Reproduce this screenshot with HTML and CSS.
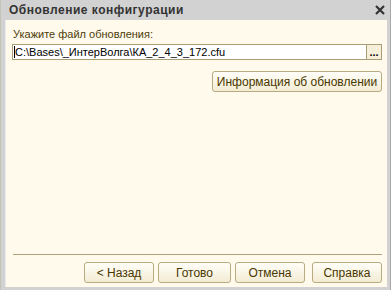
FILE: index.html
```html
<!DOCTYPE html>
<html lang="ru">
<head>
    <meta charset="UTF-8">
    <title>Обновление конфигурации</title>
    <link rel="stylesheet" href="styles.css">
</head>
<body>
    <div class="window">
        <div class="titlebar">
            <span class="title">Обновление конфигурации</span>
            <svg class="close" width="10" height="10" viewBox="0 0 10 10">
                <path d="M1 1 L9 9 M9 1 L1 9" stroke="#333" stroke-width="2.2"/>
            </svg>
        </div>
        <div class="content">
            <div class="label">Укажите файл обновления:</div>
            <div class="file-row">
                <div class="file-input">C:\Bases\_ИнтерВолга\КА_2_4_3_172.cfu</div>
                <div class="dots">...</div>
            </div>
            <div class="info-row">
                <button class="btn info">Информация об обновлении</button>
            </div>
            <div class="spacer"></div>
            <div class="separator"></div>
            <div class="buttons">
                <button class="btn">&lt; Назад</button>
                <button class="btn wide">Готово</button>
                <button class="btn">Отмена</button>
                <button class="btn help">Справка</button>
            </div>
        </div>
    </div>
</body>
</html>
```

FILE: styles.css
```css
body {
    margin: 0;
    padding: 0;
    font-family: "Liberation Sans", Arial, sans-serif;
    font-size: 11px;
    color: #4a3a0a;
}

.window {
    width: 391px;
    height: 290px;
    box-sizing: border-box;
    background-color: #d2d2d2;
    border-left: 1px solid #c4c4b4;
    border-right: 1px solid #a8a8a8;
    display: flex;
    flex-direction: column;
}

.titlebar {
    height: 20px;
    display: flex;
    align-items: center;
    padding: 0 4px 0 8px;
}

.title {
    font-weight: bold;
    font-size: 12px;
    color: #333;
    flex: 1;
    letter-spacing: 0.5px;
}

.close {
    margin-right: 1px;
}

.content {
    flex: 1;
    margin: 0 3px 3px 4px;
    background-color: #fffaeb;
    border-left: 1px solid #e8e8f0;
    display: flex;
    flex-direction: column;
    padding: 7px 5px 4px 6px;
}

.label {
    height: 14px;
    line-height: 14px;
    margin-left: 1px;
    color: #4d3c08;
}

.file-row {
    display: flex;
    margin-top: 3px;
    height: 16px;
}

.file-input {
    flex: 1;
    background-color: #fff;
    border: 1px solid #a89d74;
    border-right: none;
    line-height: 14px;
    padding-left: 1px;
    color: #000;
    overflow: hidden;
    white-space: nowrap;
}

.file-input::before {
    content: "";
    display: inline-block;
    width: 1px;
    height: 12px;
    background: #000;
    vertical-align: -2px;
}

.dots {
    width: 14px;
    border: 1px solid #a89d74;
    background-color: #f6f0da;
    text-align: center;
    line-height: 14px;
    color: #000;
    font-weight: bold;
    font-size: 11px;
}

.info-row {
    display: flex;
    justify-content: flex-end;
    margin-top: 11px;
}

.btn {
    font-family: "Liberation Sans", Arial, sans-serif;
    font-size: 12px;
    color: #4a3700;
    height: 21px;
    width: 70px;
    padding: 0;
    border: 1px solid #b8ab80;
    border-radius: 3px;
    background: linear-gradient(#fffef8, #f3ecd4);
}

.info {
    width: 170px;
}

.spacer {
    flex: 1;
}

.separator {
    height: 1px;
    background-color: #ada07a;
    margin: 0 0 7px 1px;
}

.buttons {
    display: flex;
    justify-content: flex-end;
    gap: 4px;
}

.wide {
    width: 73px;
}

.help {
    margin-left: 3px;
}
```
